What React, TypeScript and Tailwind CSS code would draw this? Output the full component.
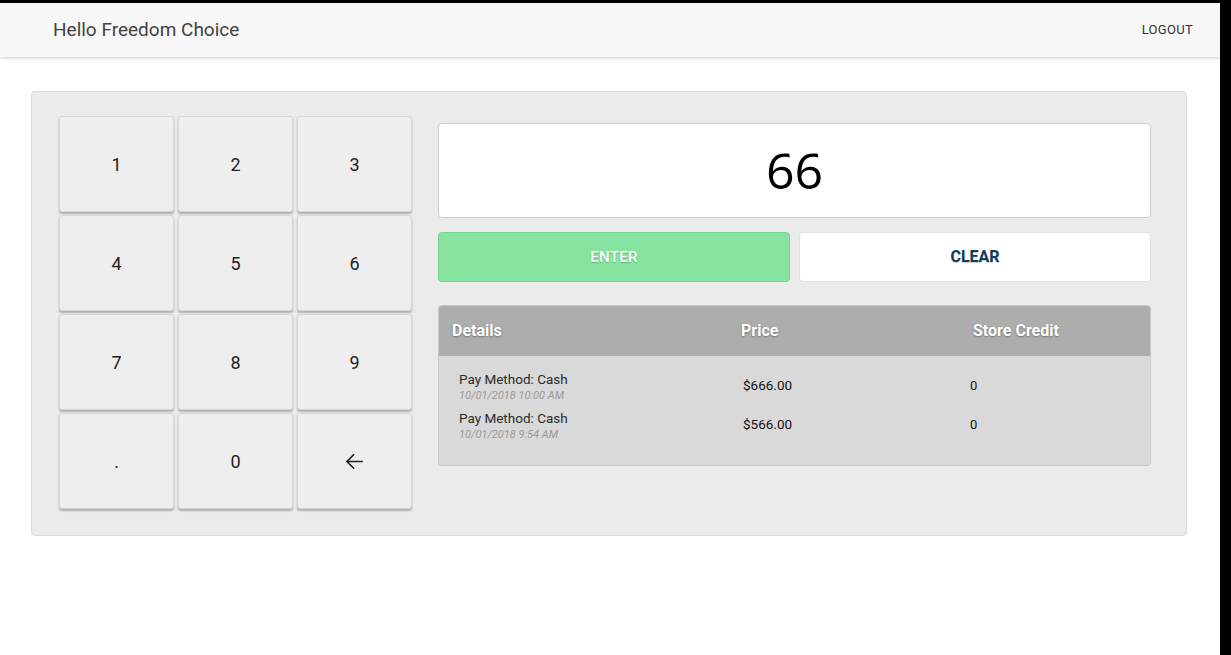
import React, { useState } from 'react';

// --- TYPES & DATA ---

interface Payment {
  id: string;
  method: string;
  date: string;
  price: string;
  credit: string;
}

const PAYMENTS: Payment[] = [
  { id: 'p-1', method: 'Cash', date: '10/01/2018 10:00 AM', price: '$666.00', credit: '0' },
  { id: 'p-2', method: 'Cash', date: '10/01/2018 9:54 AM', price: '$566.00', credit: '0' },
];

const KEYS = ['1', '2', '3', '4', '5', '6', '7', '8', '9', '.', '0', 'back'];

// --- ICONS ---

const BackArrow = () => (
  <svg width="25" height="25" viewBox="0 0 24 24" fill="#222">
    <path d="M20 11.2H6.6l5.6-5.6-1.1-1.1L3.6 12l7.5 7.5 1.1-1.1-5.6-5.6H20z" />
  </svg>
);

// --- SUB-COMPONENTS ---

const Key: React.FC<{ value: string; onPress: (v: string) => void }> = ({ value, onPress }) => (
  <button
    onClick={() => onPress(value)}
    className="h-[96px] bg-[#eeeeee] border border-[#d6d6d6] rounded-[3px] shadow-[0_2px_2px_rgba(0,0,0,0.25)] flex items-center justify-center text-[18px] text-[#222]"
  >
    {value === 'back' ? <BackArrow /> : value}
  </button>
);

// --- MAIN ---

const App: React.FC = () => {
  const [amount, setAmount] = useState('66');

  const press = (v: string) => {
    if (v === 'back') setAmount(a => a.slice(0, -1));
    else setAmount(a => a + v);
  };

  return (
    <div className="min-h-screen bg-black pt-[3px] pr-[11px]" style={{ fontFamily: 'Roboto, "Liberation Sans", sans-serif' }}>
      <div className="bg-white min-h-[652px]">
        <header className="h-[54px] bg-[#f8f8f8] shadow-[0_1px_3px_rgba(0,0,0,0.2)] flex items-center justify-between pl-[53px] pr-[27px]">
          <h1 className="text-[19px] text-[#424242]">Hello Freedom Choice</h1>
          <button className="text-[13px] text-[#333] tracking-[0.3px]">LOGOUT</button>
        </header>

        <main className="pt-[34px] pl-[31px] pr-[33px]">
          <section className="flex bg-[#ebebeb] border border-[#dcdcdc] rounded-[4px] pl-[27px] pt-[24px] pb-[26px] pr-[35px]">
            <div className="w-[353px] grid grid-cols-3 gap-x-[4px] gap-y-[3px] self-start">
              {KEYS.map(k => (
                <Key key={k} value={k} onPress={press} />
              ))}
            </div>

            <div className="flex-1 ml-[26px] pt-[7px]">
              <div className="h-[95px] bg-white border border-[#cfcfcf] rounded-[4px] flex items-center justify-center">
                <span className="text-[50px] text-black" style={{ fontFamily: '"Open Sans", "DejaVu Sans", sans-serif' }}>{amount}</span>
              </div>

              <div className="mt-[14px] flex gap-[9px]">
                <button className="flex-1 h-[50px] bg-[#86e3a0] border border-[#7ad394] rounded-[4px] text-white text-[15px] font-medium tracking-[0.3px] [text-shadow:0_1px_1px_rgba(0,0,0,0.25)]">
                  ENTER
                </button>
                <button className="flex-1 h-[50px] bg-white border border-[#e2e2e2] rounded-[4px] text-[#0d3c5e] text-[16px] font-bold [text-shadow:0_1px_1px_rgba(0,0,0,0.2)]">
                  CLEAR
                </button>
              </div>

              <div className="mt-[23px] rounded-[4px] overflow-hidden border border-[#c8c8c8] bg-[#d9d9d9] h-[161px]">
                <div className="h-[50px] bg-[#adadad] grid grid-cols-[289px_232px_1fr] items-center text-white text-[16px] font-bold [text-shadow:0_1px_2px_rgba(0,0,0,0.35)]">
                  <div className="pl-[13px]">Details</div>
                  <div className="pl-[13px]">Price</div>
                  <div className="pl-[13px]">Store Credit</div>
                </div>
                <div className="pt-[11px]">
                  {PAYMENTS.map(p => (
                    <div key={p.id} className="h-[39px] grid grid-cols-[289px_232px_1fr] items-center">
                      <div className="pl-[20px]">
                        <div className="text-[13.5px] leading-[16px] text-[#2a2a2a]">Pay Method: {p.method}</div>
                        <div className="mt-[2px] text-[11px] leading-[13px] italic text-[#9a9a9a]">{p.date}</div>
                      </div>
                      <div className="pl-[15px] pb-[2px] text-[13.5px] text-[#111]">{p.price}</div>
                      <div className="pl-[10px] pb-[2px] text-[13px] text-[#111]">{p.credit}</div>
                    </div>
                  ))}
                </div>
              </div>
            </div>
          </section>
        </main>
      </div>
    </div>
  );
};

export default App;
